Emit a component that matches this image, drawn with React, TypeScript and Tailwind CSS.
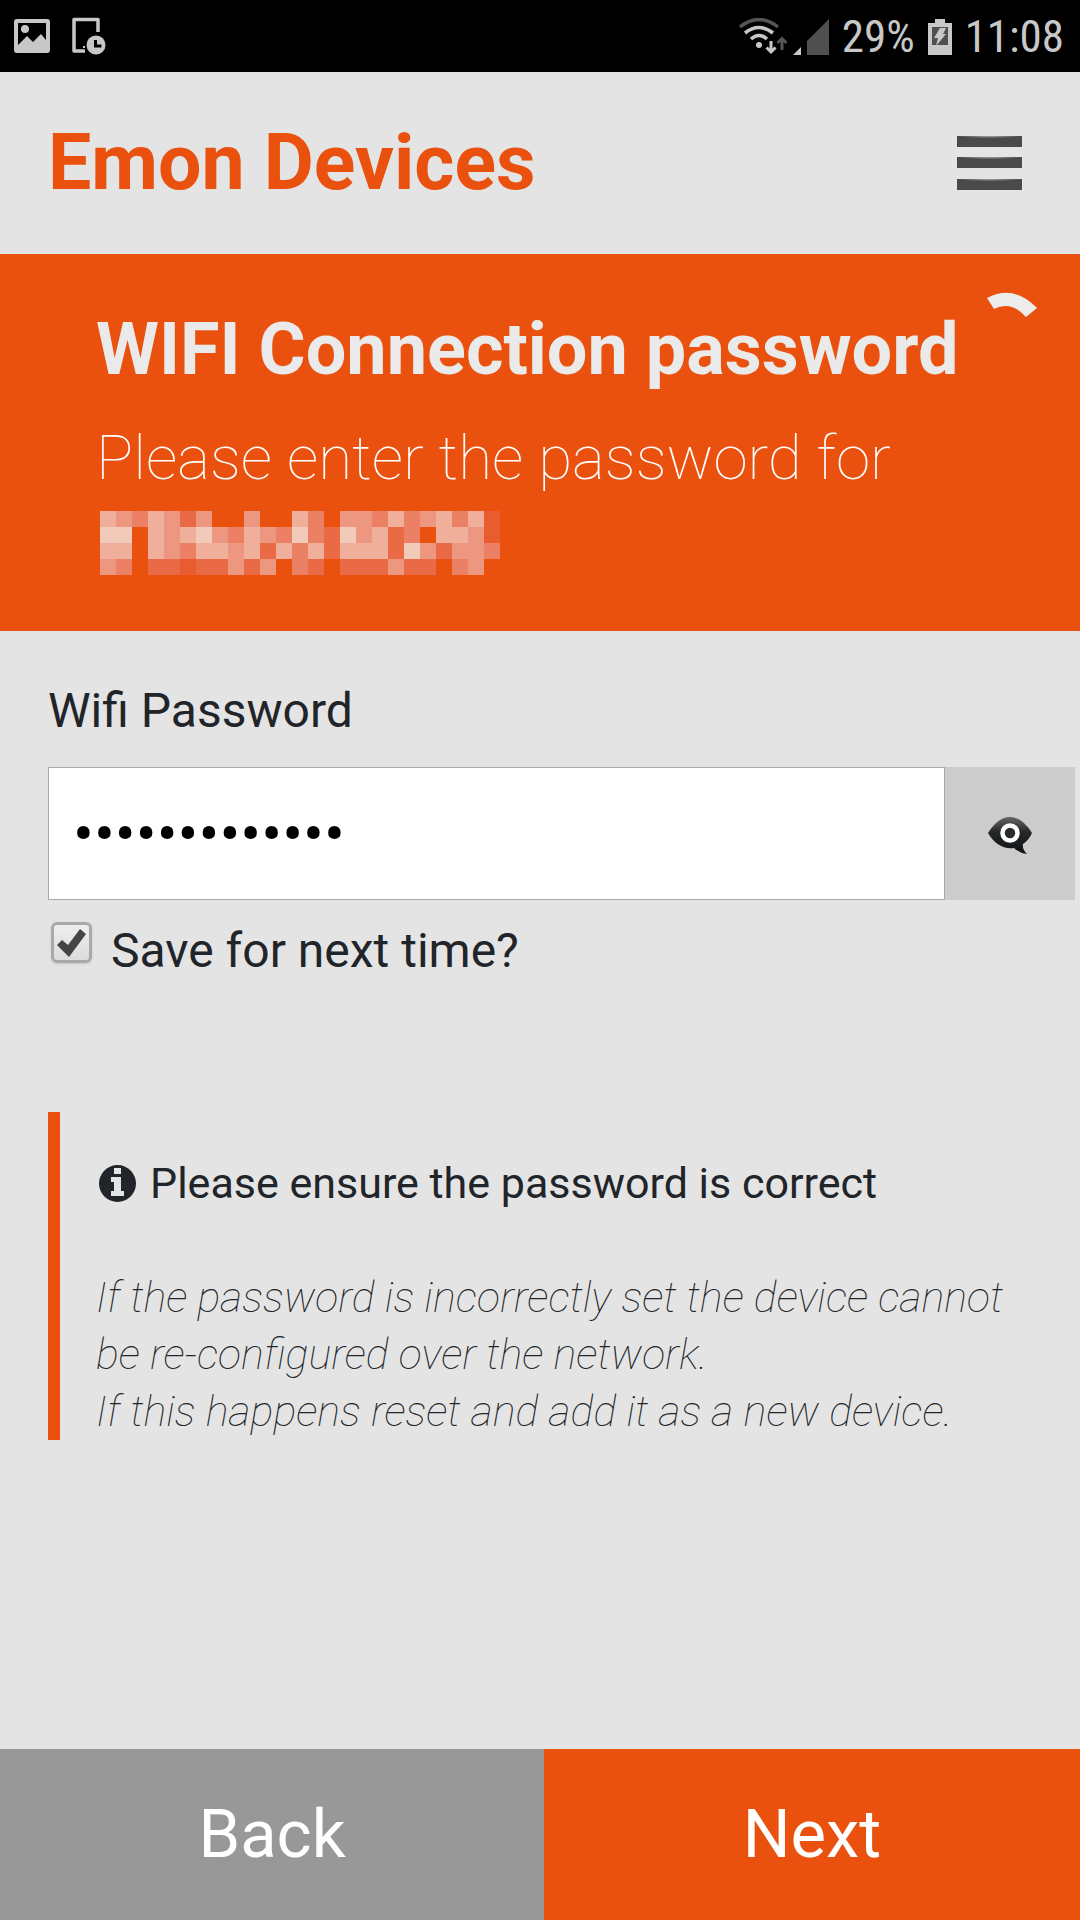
const A = "#f2cab9";
const B = "#efaf9b";
const C = "#ed9680";
const D = "#eb8065";
const E = "#ea6a45";
const F = "#e95c30";
const _ = "";

const mosaic = [
  [B, C, D, B, C, E, C, _, _, C, _, _, B, D, _, C, C, D, B, D, C, B, D, B, F],
  [A, A, _, B, C, B, A, C, D, B, C, D, A, D, E, A, C, B, E, D, _, B, B, C, F],
  [B, B, _, B, C, D, B, B, C, B, E, B, D, B, E, B, B, B, E, A, C, E, C, C, D],
  [C, D, _, E, E, F, E, E, C, E, C, _, D, E, _, E, E, E, C, E, E, _, D, C, _],
];

function GalleryIcon() {
  return (
    <svg width="36" height="36" viewBox="0 0 36 36" aria-hidden="true">
      <path fill="#c8c8c8" fillRule="evenodd" d="M3 1h30a3 3 0 0 1 3 3v28a3 3 0 0 1-3 3H3a3 3 0 0 1-3-3V4a3 3 0 0 1 3-3Zm1 4v22l9-9 6 6 8-8 5 6V5Z" />
      <circle cx="11" cy="11" r="4" fill="#c8c8c8" />
    </svg>
  );
}

function PhoneClockIcon() {
  return (
    <svg width="34" height="38" viewBox="0 0 34 38" aria-hidden="true">
      <path d="M26 15V2.500H2V34h11" fill="none" stroke="#c8c8c8" strokeWidth="3.500" strokeLinejoin="round" />
      <circle cx="24" cy="28" r="9.500" fill="#c8c8c8" />
      <path d="M23.500 23v6h6" fill="none" stroke="#000" strokeWidth="3" />
      <path d="M11 29h2v2h-2Z" fill="#c8c8c8" />
    </svg>
  );
}

function WifiIcon() {
  return (
    <svg width="48" height="38" viewBox="0 0 48 38" aria-hidden="true" fill="none" strokeWidth="3.500">
      <path d="M1 9Q20-6 39 9" stroke="#555" />
      <path d="M6 15Q20 4 34 15" stroke="#c8c8c8" />
      <path d="M12 21Q20 14 28 21" stroke="#c8c8c8" />
      <circle cx="20" cy="27" r="3" fill="#c8c8c8" />
      <path d="M32 23v10M27.500 29.500l4.500 4.500 4.500-4.500" stroke="#c8c8c8" strokeWidth="3" />
      <path d="M43 32V21M38.500 25l4.500-4.500 4.500 4.500" stroke="#555" strokeWidth="3" />
    </svg>
  );
}

function SignalIcon() {
  return (
    <svg width="36" height="36" viewBox="0 0 36 36" aria-hidden="true">
      <path d="M0 36 8 28v8Z" fill="#c8c8c8" />
      <path d="M14 22 36 0v36H14Z" fill="#505050" />
    </svg>
  );
}

function BatteryIcon() {
  return (
    <svg width="24" height="36" viewBox="0 0 24 36" aria-hidden="true">
      <path d="M7 0h10v4h7v32H0V4h7Z" fill="#c8c8c8" />
      <path d="M4 8h16v18H4Z" fill="#505050" />
      <path d="M12 9h6l-3 6h3L8 27l2-8H6Z" fill="#c8c8c8" />
    </svg>
  );
}

function MenuIcon() {
  return (
    <svg width="65" height="54" viewBox="0 0 65 54" aria-hidden="true">
      <defs>
        <radialGradient id="shine" cx="50%" cy="0%" r="50%" gradientTransform="matrix(1 0 0 .9 0 0)">
          <stop offset="0" stopColor="#a5a5a5" />
          <stop offset="1" stopColor="#4a4a4a" />
        </radialGradient>
      </defs>
      {[0, 21, 43].map((y) => (
        <g key={y}>
          <rect y={y} width="65" height="11" fill="#4a4a4a" />
          <rect y={y} width="65" height="5" fill="url(#shine)" />
        </g>
      ))}
    </svg>
  );
}

function EyeIcon() {
  return (
    <svg width="44" height="38" viewBox="0 0 44 38" aria-hidden="true">
      <defs>
        <linearGradient id="eye" x1="0" y1="0" x2="0" y2="1">
          <stop offset="0" stopColor="#666" />
          <stop offset="0.400" stopColor="#25282a" />
          <stop offset="1" stopColor="#101214" />
        </linearGradient>
      </defs>
      <path d="M0 16Q10 0 22 0T44 16Q41 23 35 27q-1 5 4 10-8-1-13-6Q10 33 0 16Z" fill="url(#eye)" />
      <circle cx="22" cy="16" r="7.500" fill="#2b2b2b" stroke="#fff" strokeWidth="4.500" />
    </svg>
  );
}

export default function App() {
  return (
    <div className="flex min-h-screen flex-col bg-[#e4e4e4] font-['Roboto',sans-serif] text-[#212529]">
      <div className="flex h-18 items-center justify-between bg-black pr-4 pl-[14px] text-[#c8c8c8]">
        <div className="flex items-center gap-[22px]">
          <GalleryIcon />
          <PhoneClockIcon />
        </div>
        <div className="flex items-center gap-[13px] pt-[2px] font-['Roboto_Condensed','Roboto',sans-serif] text-[45px]">
          <div className="flex items-center gap-[6px]">
            <WifiIcon />
            <SignalIcon />
          </div>
          <span>29%</span>
          <BatteryIcon />
          <span>11:08</span>
        </div>
      </div>

      <header className="flex h-[182px] items-center justify-between pr-[58px] pl-12">
        <h1 className="text-[77px] leading-[92px] font-bold text-[#ea510f]">Emon Devices</h1>
        <button type="button" aria-label="Menu">
          <MenuIcon />
        </button>
      </header>

      <section className="relative bg-[#ea510f] px-24 pt-[53px] pb-14 text-[#eaeaea]">
        <h2 className="text-[72px] leading-[86px] font-bold">WIFI Connection password</h2>
        <p className="mt-5 text-[62px] leading-[90px] font-thin text-white">Please enter the password for</p>
        <svg className="mt-2 ml-1" width="400" height="64" viewBox="0 0 400 64" shapeRendering="crispEdges" aria-label="Hidden network name">
          {mosaic.map((row, y) =>
            row.map((fill, x) => fill && <rect key={`${x}-${y}`} x={x * 16} y={y * 16} width="16" height="16" fill={fill} />),
          )}
        </svg>
        <svg className="absolute top-[38px] right-[43px]" width="50" height="28" viewBox="0 0 50 28" aria-hidden="true">
          <path d="M0 6Q27-8 50 16L39 25Q24 8 7 17Z" fill="#ececec" />
        </svg>
      </section>

      <main className="flex-1 pt-12 pr-[5px] pl-12">
        <label htmlFor="password" className="block text-[48px] leading-[64px]">Wifi Password</label>
        <div className="mt-6 flex h-[133px]">
          <input id="password" type="password" defaultValue="emonpassword1" className="min-w-0 flex-1 border border-[#a9a9a9] bg-white px-6 text-[62px] text-black outline-none" />
          <button type="button" aria-label="Show password" className="flex w-[130px] items-center justify-center bg-[#cccccc] pt-1">
            <EyeIcon />
          </button>
        </div>
        <label className="mt-[19px] ml-[3px] flex w-fit gap-[19px] text-[48px] leading-[64px]">
          <span className="relative mt-[3px] size-[41px]">
            <input type="checkbox" defaultChecked className="block size-[41px] appearance-none rounded-md border-3 border-[#a9a9a9] bg-linear-to-b from-[#eeeeee] to-[#dcdcdc] shadow-sm" />
            <svg className="pointer-events-none absolute inset-0" width="41" height="41" viewBox="0 0 41 41" aria-hidden="true">
              <path d="M6 23 11 18 17 23 29 7 35 12 18 35Z" fill="#444" />
            </svg>
          </span>
          Save for next time?
        </label>

        <aside className="mt-[129px] mr-10 border-l-12 border-[#ea510f] pt-10 pl-9 text-[43px] leading-[57px]">
          <p className="flex items-center gap-[14px] pt-[3px]">
            <svg className="ml-[3px]" width="37" height="37" viewBox="0 0 37 37" aria-hidden="true">
              <circle cx="18.500" cy="18.500" r="18.500" fill="#212529" />
              <path d="M15 3h7v6h-7ZM12 12h10v14h3v5H12v-5h3v-9h-3Z" fill="#e4e4e4" />
            </svg>
            Please ensure the password is correct
          </p>
          <p className="mt-[57px] font-thin italic">
            If the password is incorrectly set the device cannot be re-configured over the network.
            <br />
            If this happens reset and add it as a new device.
          </p>
        </aside>
      </main>

      <footer className="flex h-[171px] text-[67px] text-white">
        <button type="button" className="w-[544px] bg-[#989898]">Back</button>
        <button type="button" className="flex-1 bg-[#ea510f]">Next</button>
      </footer>
    </div>
  );
}
